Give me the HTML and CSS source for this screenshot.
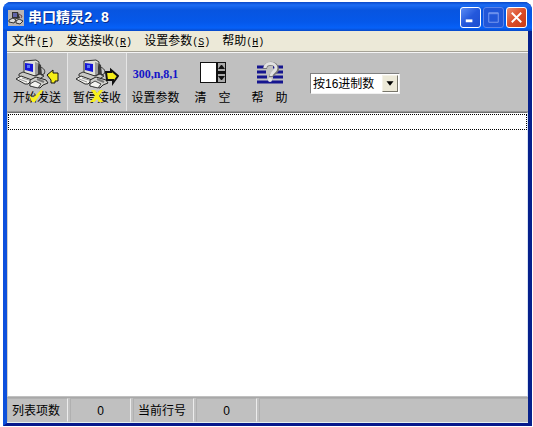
FILE: index.html
```html
<!DOCTYPE html>
<html lang="zh-CN">

<head>
    <meta charset="utf-8">
    <title>串口精灵2.8</title>
    <meta name="viewport" content="width=device-width, initial-scale=1">
    <link rel="stylesheet" href="styles.css">
</head>

<body>
    <!-- shared by both send / receive buttons -->
    <svg class="defs" aria-hidden="true">
        <symbol id="computers" viewBox="0 0 34 31">
            <path d="M22 3l4 3 1 10-5 2z" fill="#3c3c3c"/>
            <path d="M9 2l12-1 3 2-1 12-4 2-10-3z" fill="#e0e0d8" stroke="#333"/>
            <path d="M20 3l3 1v11l-3 1z" fill="#9a9a9a"/>
            <path d="M10 4l8 1v8l-8-2z" fill="#1616d8"/>
            <path d="M12 6h3v3h-3z" fill="#5878f4"/>
            <path d="M4 15l4-2 12 4 5-2 4 2-6 4-5 1-14-5z" fill="#c8c8c4" stroke="#333"/>
            <path d="M1 20l5-3 11 4-4 4-3 0z" fill="#f2f2ee" stroke="#2a2a2a"/>
            <path d="M4 20l8 3M7 19l7 2" stroke="#999"/>
            <path d="M15 21l6-3 10 3 2 3-5 2-3 3-10-2z" fill="#d0d0cc" stroke="#222"/>
            <path d="M15 25l5-3 6 3-3 4-8-2z" fill="#f4f4f0" stroke="#444"/>
            <path d="M22 20l7 3" stroke="#777" stroke-width="2"/>
            <path d="M25 8c4 1 6 4 4 7l-3 1" fill="none" stroke="#333"/>
        </symbol>
    </svg>

    <div class="window">
        <header class="titlebar">
            <svg class="app-icon" viewBox="0 0 16 16">
                <rect width="16" height="16" fill="#b9b5b4"/>
                <path d="M4 2h6l2 6-3 1-5-1z" fill="#333"/>
                <path d="M5 3h4v4H5z" fill="#5f64a8"/>
                <path d="M1 10l4-2 3 2-2 3-5-1zM8 11l3-2 4 2-3 3-4-1z" fill="#ddd" stroke="#333"/>
                <path d="M11 4l3 2-1 2" fill="none" stroke="#704848"/>
            </svg>
            <h1>串口精灵2.8</h1>
            <button class="caption" aria-label="最小化">
                <svg viewBox="0 0 20 20"><path d="M5 12h7v3H5z" fill="#fff"/></svg>
            </button>
            <button class="caption maximize" aria-label="最大化" disabled>
                <svg viewBox="0 0 20 20"><path d="M5 5h10v10H5zM5 6h10" fill="none" stroke="#7b9cf0"/></svg>
            </button>
            <button class="caption close" aria-label="关闭">
                <svg viewBox="0 0 20 20"><path d="M5 5l10 10M15 5L5 15" stroke="#fff" stroke-width="2"/></svg>
            </button>
        </header>

        <nav class="menu">
            <a href="#">文件<kbd>(<u>F</u>)</kbd></a>
            <a href="#">发送接收<kbd>(<u>R</u>)</kbd></a>
            <a href="#">设置参数<kbd>(<u>S</u>)</kbd></a>
            <a href="#">帮助<kbd>(<u>H</u>)</kbd></a>
        </nav>

        <div class="toolbar">
            <button class="tool">
                <svg class="tool-icon" viewBox="0 0 44 31">
                    <use href="#computers" width="34" height="31"/>
                    <path d="M32 16l6-5v3h5v8h-3v2h-4v-3z" fill="#f5ee18" stroke="#111"/>
                </svg>
                <span>开始发送</span>
                <svg class="mark" viewBox="0 0 16 14"><path d="M1 6l4 3 8-8h2L7 13H4z" fill="#f7f01c"/></svg>
            </button>
            <button class="tool active">
                <svg class="tool-icon" viewBox="0 0 44 31">
                    <use href="#computers" width="34" height="31"/>
                    <path d="M31 13h5v-2l7 6-5 7v-3h-6z" fill="#f5ee18" stroke="#111" stroke-width="2"/>
                </svg>
                <span>暂停接收</span>
                <svg class="mark" viewBox="0 0 16 14"><path d="M2 1h4l2 3 3-3h3l-4 6 4 6h-4l-2-3-3 3H1l5-6z" fill="#f7f01c"/></svg>
            </button>
            <button class="tool small">
                <b class="params">300,n,8,1</b>
                <span>设置参数</span>
            </button>
            <button class="tool small">
                <svg class="tool-icon" viewBox="0 0 44 31">
                    <path d="M9 3h26v21H9z" fill="#111"/>
                    <path d="M10 4h15v19H10z" fill="#fff"/>
                    <path d="M27 4h7v8h-7zM27 15h7v8h-7z" fill="#aaa"/>
                    <path d="M27 10l3-4h1l3 4zM27 17l3 4h1l3-4z" fill="#111"/>
                </svg>
                <span class="spread"><i>清</i><i>空</i></span>
            </button>
            <button class="tool small">
                <svg class="tool-icon" viewBox="0 0 44 31">
                    <path d="M9 8h10M25 8h10M9 13h9M27 13h8M9 18h10M25 18h10M9 23h26" stroke="#15158f" stroke-width="3"/>
                    <path d="M17 10c0-7 12-7 12 0 0 4-6 4-6 8" fill="none" stroke="#777" stroke-width="4"/>
                    <path d="M17 9c0-6 11-6 11 0 0 4-5 4-5 8" fill="none" stroke="#e2e2e2" stroke-width="3"/>
                    <circle cx="22" cy="21" r="2" fill="#e2e2e2"/>
                </svg>
                <span class="spread"><i>帮</i><i>助</i></span>
            </button>
            <div class="format">
                <select aria-label="显示格式">
                    <option>按16进制数</option>
                </select>
                <svg class="drop" viewBox="0 0 16 17"><path d="M4 6h8l-4 5z" fill="#000"/></svg>
            </div>
        </div>

        <main class="list">
            <div class="row"></div>
        </main>

        <footer class="status">
            <span>列表项数</span>
            <span class="value">0</span>
            <span>当前行号</span>
            <span class="value">0</span>
            <span class="rest"></span>
        </footer>
    </div>
</body>

</html>
```
FILE: styles.css
```css
* {
    margin: 0;
    padding: 0;
    box-sizing: border-box;
}

body {
    height: 100vh;
    padding: 2px 1px 1px 3px;
    background: #fff;
    font: 12px/16px "Liberation Sans", "Noto Sans CJK SC", sans-serif;
    color: #000;
}

button {
    border: 0;
    background: none;
    font: inherit;
    color: inherit;
}

svg {
    display: block;
}

.defs {
    position: absolute;
    width: 0;
    height: 0;
}

.window {
    display: flex;
    flex-direction: column;
    height: 100%;
    border: solid #0831b0;
    border-width: 0 4px 3px;
    border-left-color: #0d50dc;
    border-right-color: #06208c;
    border-bottom-color: #06188c;
    border-radius: 8px 8px 0 0;
    background: #0a52e0;
}

/* title bar */
.titlebar {
    display: flex;
    align-items: center;
    flex: none;
    gap: 2px;
    height: 29px;
    margin: 0 -4px;
    padding: 2px 5px 0 5px;
    border-radius: 8px 8px 0 0;
    background: linear-gradient(#0a48c8, #1c6cf4 3px, #0855e0 8px, #0558ea 20px, #0661f8 26px, #0848c8);
    color: #fff;
}

.app-icon {
    width: 16px;
    height: 16px;
}

.titlebar h1 {
    flex: 1;
    padding-left: 2px;
    font: bold 14px/20px "Liberation Mono", "Noto Sans CJK SC", monospace;
    text-shadow: 1px 1px #0a2f8c;
}

.caption {
    width: 21px;
    height: 21px;
    border: 1px solid #fff;
    border-radius: 3px;
    background: linear-gradient(135deg, #5c8cf4, #2458dc 50%, #1c4ed0);
}

.caption.maximize {
    border-color: #5c84e8;
    background: #2156d8;
}

.caption.close {
    background: linear-gradient(135deg, #ec8c70, #dc4c28 50%, #c83c18);
}

/* menu */
.menu {
    display: flex;
    flex: none;
    gap: 12px;
    height: 21px;
    padding: 2px 5px;
    background: #ece9d8;
    border-bottom: 1px solid #a5a296;
}

.menu a {
    color: #000;
    text-decoration: none;
    white-space: nowrap;
}

.menu kbd {
    font: 10px/16px "Liberation Mono", monospace;
}

/* toolbar */
.toolbar {
    display: flex;
    flex: none;
    height: 60px;
    border-top: 1px solid #f4f4f4;
    border-bottom: 1px solid #989898;
    background: #c0c0c0;
}

.tool {
    position: relative;
    display: flex;
    flex-direction: column;
    align-items: center;
    width: 60px;
    padding-top: 6px;
    white-space: nowrap;
}

.tool.active {
    border: 1px solid #e6e6e6;
    border-width: 0 1px;
    background: #c8c8c8;
}

.tool.small {
    width: 57px;
}

.tool-icon {
    width: 44px;
    height: 31px;
}

.mark {
    position: absolute;
    left: 21px;
    top: 36px;
    width: 16px;
    height: 14px;
}

.params {
    font: bold 12px/31px "Liberation Serif", serif;
    color: #1414c8;
}

.spread {
    display: flex;
    gap: 12px;
}

.spread i {
    font-style: normal;
}

.format {
    position: relative;
    width: 90px;
    height: 21px;
    margin: 20px 0 0 12px;
}

.format select {
    appearance: none;
    width: 100%;
    height: 100%;
    padding-left: 2px;
    border: 1px solid;
    border-color: #808080 #f0f0f0 #f0f0f0 #808080;
    border-radius: 0;
    background: #fff;
    font: inherit;
    color: #000;
}

.drop {
    position: absolute;
    top: 2px;
    right: 2px;
    width: 16px;
    height: 17px;
    border: 1px solid;
    border-color: #f4f2e8 #77756a #77756a #f4f2e8;
    background: #ece9d8;
    pointer-events: none;
}

/* received data */
.list {
    flex: 1;
    padding-top: 1px;
    border: 1px solid;
    border-color: #707070 #d8e4f4 #c0c0c0 #d0d0d0;
    background: #fff;
}

.row {
    height: 16px;
    border: 1px dotted #000;
}

/* status bar */
.status {
    display: flex;
    flex: none;
    gap: 2px;
    height: 26px;
    border-top: 1px solid #a8a8a8;
    border-bottom: 1px solid #e4f0f0;
    background: #c0c0c0;
}

.status span {
    width: 61px;
    padding-left: 4px;
    border: 1px solid;
    border-color: #b0b0b0 #ececec #c0c0c0 #b0b0b0;
    line-height: 24px;
    white-space: nowrap;
}

.status .value {
    padding-left: 0;
    text-align: center;
}

.status .rest {
    flex: 1;
    border-right: 0;
}
```
